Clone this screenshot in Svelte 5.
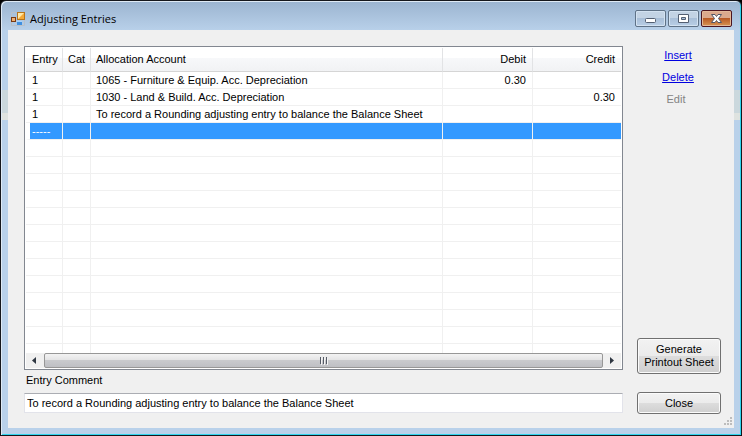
<script lang="ts">
  type Entry = { entry: string; cat: string; account: string; debit: string; credit: string };

  const blank: Entry = { entry: "", cat: "", account: "", debit: "", credit: "" };
  const comment = "To record a Rounding adjusting entry to balance the Balance Sheet";

  let rows: Entry[] = [
    { ...blank, entry: "1", account: "1065 - Furniture & Equip. Acc. Depreciation", debit: "0.30" },
    { ...blank, entry: "1", account: "1030 - Land & Build. Acc. Depreciation", credit: "0.30" },
    { ...blank, entry: "1", account: comment },
    { ...blank, entry: "-----" },
    ...Array.from({ length: 13 }, () => ({ ...blank })),
  ];
  let selected = 3;
  let entryComment = comment;
</script>

<div class="window">
  <header class="title-bar">
    <svg class="app-icon" width="14" height="14" viewBox="0 0 14 14">
      <path d="M0.500 1v12.500H13.500V8M0.500 0.500h5" fill="none" stroke="#b9c0c8" />
      <rect x="0.500" y="5.500" width="4" height="4" fill="#f0b070" stroke="#7a3a12" />
      <rect x="6.500" y="0.500" width="7" height="7" fill="#f5a938" stroke="#b8741a" />
      <path d="M7 1h6L7 7z" fill="#ffe9a8" />
      <rect x="6" y="9" width="5" height="4" fill="#3f8fe0" />
      <path d="M6 9h5v1H6z" fill="#a5d2fa" />
    </svg>
    <h1>Adjusting Entries</h1>
    <div class="window-buttons">
      <button aria-label="Minimize">
        <svg width="29" height="15" viewBox="0 0 29 15">
          <rect x="9.500" y="7.500" width="10" height="4" rx="1" fill="#fff" stroke="#535f72" />
        </svg>
      </button>
      <button aria-label="Maximize">
        <svg width="29" height="15" viewBox="0 0 29 15">
          <path fill-rule="evenodd" d="M9.500 3.500h10v8h-10zM12.500 6.500v2h4v-2z" fill="#fff" stroke="#535f72" />
        </svg>
      </button>
      <button class="close" aria-label="Close window">
        <svg width="29" height="15" viewBox="0 0 29 15">
          <path d="M9.500 3.500h3.500l1.500 2 1.500-2h3.500l-3 4 3 4h-3.500l-1.500-2-1.500 2H9.500l3-4z" fill="#fff" stroke="#535666" />
        </svg>
      </button>
    </div>
  </header>

  <main>
    <section class="entries">
      <div class="list-view">
        <div class="list-body">
          <table>
            <colgroup>
              <col class="col-entry" />
              <col class="col-cat" />
              <col />
              <col class="col-debit" />
              <col class="col-credit" />
            </colgroup>
            <thead>
              <tr>
                <th>Entry</th>
                <th>Cat</th>
                <th>Allocation Account</th>
                <th class="amount">Debit</th>
                <th class="amount">Credit</th>
              </tr>
            </thead>
            <tbody>
              {#each rows as row, i}
                <tr class:selected={i === selected} on:click={() => (selected = i)}>
                  <td>{row.entry}</td>
                  <td>{row.cat}</td>
                  <td>{row.account}</td>
                  <td class="amount">{row.debit}</td>
                  <td class="amount">{row.credit}</td>
                </tr>
              {/each}
            </tbody>
          </table>
        </div>
        <div class="scrollbar">
          <button class="arrow" aria-label="Scroll left">
            <svg width="18" height="15" viewBox="0 0 18 15"><path d="M10 4v7L6 7.500z" fill="#2f3742" /></svg>
          </button>
          <div class="thumb">
            <svg width="9" height="8" viewBox="0 0 9 8">
              <path d="M1.500 0v7M4.500 0v7M7.500 0v7" stroke="#555b66" />
              <path d="M2.500 1v7M5.500 1v7M8.500 1v7" stroke="#f4f4f4" />
            </svg>
          </div>
          <button class="arrow" aria-label="Scroll right">
            <svg width="18" height="15" viewBox="0 0 18 15"><path d="M7 4v7l4-3.500z" fill="#2f3742" /></svg>
          </button>
        </div>
      </div>
      <label for="entry-comment">Entry Comment</label>
      <input id="entry-comment" type="text" bind:value={entryComment} />
    </section>

    <aside>
      <nav>
        <a href="#insert">Insert</a>
        <a href="#delete">Delete</a>
        <span class="disabled">Edit</span>
      </nav>
      <button class="action generate">Generate<br />Printout Sheet</button>
      <button class="action">Close</button>
    </aside>

    <svg class="grip" width="10" height="10" viewBox="0 0 10 10">
      <path d="M7 0h2v2H7zM4 3h2v2H4zM7 3h2v2H7zM1 6h2v2H1zM4 6h2v2H4zM7 6h2v2H7z" fill="#bdbdbd" />
    </svg>
  </main>
</div>

<style>
  :global(body) {
    background: #000;
  }

  .window {
    box-sizing: border-box;
    display: flex;
    flex-direction: column;
    height: 100vh;
    padding: 0 7px 7px 6px;
    border: 1px solid #15171c;
    border-radius: 6px 6px 0 0;
    background: linear-gradient(
      #9bb4d0,
      #b9d1ea 30px,
      #b9d1ea 89px,
      #cbd8dd 89px,
      #cbd8dd 112px,
      #dfe3e0 112px,
      #dfe3e0 119px,
      #b9d1ea 119px
    );
    box-shadow: inset 1px 1px #dfeaf5, inset -1px -1px #2fd5ee;
    font-family: "Liberation Sans", Arial, sans-serif;
    font-size: 11px;
    line-height: 13px;
    color: #000;
  }

  button,
  input {
    font: inherit;
    color: inherit;
  }

  .title-bar {
    display: flex;
    flex: none;
    align-items: center;
    height: 29px;
    padding: 6px 2px 0 4px;
    box-sizing: border-box;
  }

  h1 {
    flex: 1;
    margin: 0 0 0 5px;
    font-family: "Open Sans", "Noto Sans", sans-serif;
    font-size: 11px;
    font-weight: normal;
    line-height: 16px;
  }

  .window-buttons {
    display: flex;
    gap: 2px;
  }

  .window-buttons button {
    display: flex;
    padding: 0;
    border: 1px solid #5f7287;
    border-radius: 2px;
    background: linear-gradient(#c3d3e4 50%, #a9bfd8 50%, #b8cee6);
    box-shadow: inset 0 0 0 1px #d3e2f1;
  }

  .window-buttons .close {
    border-color: #4b1420;
    background: linear-gradient(#dba98d 50%, #b95a25 50%, #d79453);
    box-shadow: inset 0 0 0 1px #e3b899;
  }

  main {
    position: relative;
    display: flex;
    flex: 1;
    gap: 14px;
    min-height: 0;
    margin-left: 1px;
    padding: 16px 13px 14px 16px;
    background: #f0f0f0;
  }

  .entries {
    display: flex;
    flex: 1;
    flex-direction: column;
    min-width: 0;
  }

  .list-view {
    display: flex;
    flex: 1;
    flex-direction: column;
    min-height: 0;
    padding: 1px;
    border: 1px solid #828790;
    background: #fff;
  }

  .list-body {
    flex: 1;
    min-height: 0;
    overflow: hidden;
  }

  table {
    width: 100%;
    table-layout: fixed;
    border-collapse: separate;
    border-spacing: 0;
  }

  .col-entry {
    width: 37px;
  }

  .col-cat {
    width: 28px;
  }

  .col-debit {
    width: 90px;
  }

  .col-credit {
    width: 88px;
  }

  th {
    height: 23px;
    padding: 0 5px 0 6px;
    border-right: 1px solid #e2e3e5;
    border-bottom: 1px solid #d5d5d5;
    background: linear-gradient(#fff 45%, #f7f8fa 45%, #f1f2f4);
    font-weight: normal;
    text-align: left;
    white-space: nowrap;
  }

  td {
    height: 16px;
    padding: 0 5px 0 6px;
    border-right: 1px solid #f0f0f0;
    border-bottom: 1px solid #f0f0f0;
    white-space: nowrap;
  }

  th:nth-child(2),
  th:nth-child(3),
  td:nth-child(3) {
    padding-left: 5px;
  }

  th:last-child,
  td:last-child {
    border-right: 0;
  }

  .amount {
    padding-right: 6px;
    text-align: right;
  }

  .selected td {
    background: #3399ff;
    background-clip: padding-box;
    color: #fff;
  }

  .selected td:first-child {
    border-left: 4px solid #fff;
    padding-left: 2px;
  }

  .scrollbar {
    display: flex;
    flex: none;
    background: #f0f0f0;
  }

  .arrow {
    display: flex;
    padding: 0;
    border: 0;
    background: none;
  }

  .thumb {
    display: flex;
    flex: 1;
    align-items: center;
    justify-content: center;
    border: 1px solid #979797;
    border-radius: 2px;
    background: linear-gradient(#f3f3f3, #e4e4e5 45%, #c9cacd 50%, #bfc0c4);
  }

  label {
    margin: 4px 2px 6px;
  }

  input {
    box-sizing: border-box;
    height: 20px;
    margin-bottom: 1px;
    padding: 0 2px;
    border: 1px solid #e2e3ea;
    border-top-color: #abadb3;
    background: #fff;
  }

  aside {
    display: flex;
    flex-direction: column;
    width: 84px;
  }

  nav {
    display: flex;
    flex: 1;
    flex-direction: column;
    align-items: center;
    gap: 9px;
    padding: 3px 2px 0 0;
  }

  a {
    color: #0000e0;
  }

  .disabled {
    margin-right: 4px;
    color: #838383;
  }

  .action {
    height: 22px;
    padding: 0;
    border: 1px solid #707070;
    border-radius: 3px;
    background: linear-gradient(#f2f2f2, #ebebeb 50%, #dddddd 50%, #cfcfcf);
    box-shadow: inset 0 0 0 1px #fbfbfb;
  }

  .generate {
    height: 36px;
    margin-bottom: 18px;
  }

  .grip {
    position: absolute;
    right: 1px;
    bottom: 1px;
  }
</style>
